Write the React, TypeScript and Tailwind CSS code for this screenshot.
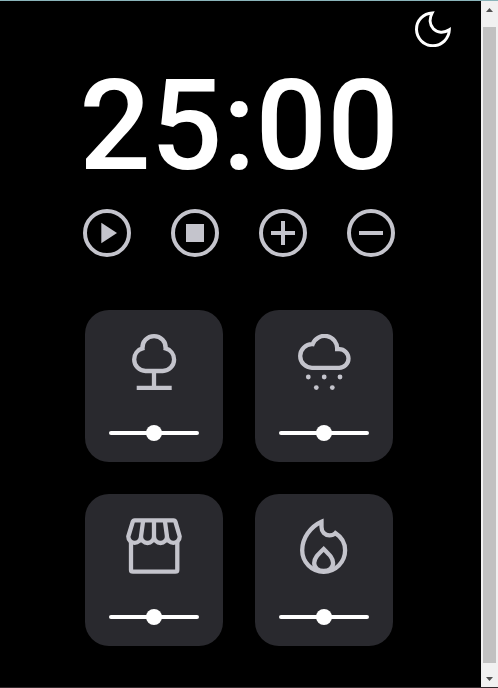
import { useState, type ReactNode } from "react";

const iconProps = {
  viewBox: "0 0 56 56",
  fill: "none",
  stroke: "currentColor",
  strokeWidth: 4.3,
  className: "size-14",
  "aria-hidden": true,
} as const;

function TreeIcon() {
  return (
    <svg {...iconProps}>
      <path d="M16.5 14.4A11.6 11.2 0 1 1 39.6 14.4A11.5 11.5 0 0 1 48.1 25.5A11.5 11.5 0 0 1 36.8 37H19.5A11.5 11.5 0 0 1 8.2 25.5A11.5 11.5 0 0 1 16.5 14.4Z" />
      <path d="M28 37V53.8M10.7 53.8H45.7" />
    </svg>
  );
}

function RainIcon() {
  return (
    <svg {...iconProps}>
      <path d="M41.2 15.2H43.2A9.3 9.3 0 0 1 43.2 33.8H16A11.8 11.8 0 0 1 4.2 22A11.8 11.8 0 0 1 16.6 10.2A12.7 12.7 0 0 1 41.2 15.2Z" />
      <g fill="currentColor" stroke="none">
        <circle cx="12.3" cy="43" r="2.4" />
        <circle cx="28.2" cy="43" r="2.4" />
        <circle cx="44" cy="43" r="2.4" />
        <circle cx="20.3" cy="53.6" r="2.4" />
        <circle cx="36.3" cy="53.6" r="2.4" />
      </g>
    </svg>
  );
}

function StoreIcon() {
  return (
    <svg {...iconProps} strokeLinejoin="round">
      <path d="M8.7 2.3H47.5Q49 2.3 49.4 3.7L53.7 18.5A6.35 6.35 0 0 1 41 18.5A6.5 6.5 0 0 1 28 18.5A6.5 6.5 0 0 1 15 18.5A6.35 6.35 0 0 1 2.3 18.5L6.8 3.7Q7.2 2.3 8.7 2.3Z" />
      <path d="M17.2 2.3L15 18.5M28 2.3V18.5M38.8 2.3L41 18.5" />
      <path d="M5 24V52Q5 53.7 7 53.7H49.3Q51.3 53.7 51.3 52V24" />
    </svg>
  );
}

function FireIcon() {
  return (
    <svg {...iconProps}>
      <path d="M25.5 3.8V9C25.5 14 29 17.4 33.4 17.4C35.8 17.4 38 16.6 39.4 15.1C45.5 19 49.1 25 49.1 32.3A21.45 21.45 0 0 1 6.2 32.3C6.2 20 14.5 8.8 25.5 3.8Z" />
      <path d="M27.7 31C22 36.5 18.2 40 18.2 45C18.2 49.8 22.3 53 27.7 53C33 53 37.1 49.8 37.1 45C37.1 40 33.3 36.5 27.7 31Z" />
    </svg>
  );
}

function RoundButton({ label, onClick, children }: { label: string; onClick: () => void; children: ReactNode }) {
  return (
    <button type="button" aria-label={label} onClick={onClick} className="size-12 cursor-pointer text-[#c4c4cc] hover:text-white">
      <svg viewBox="0 0 48 48" fill="none" stroke="currentColor" strokeWidth="4" className="size-12" aria-hidden>
        <circle cx="24" cy="24" r="22" />
        {children}
      </svg>
    </button>
  );
}

function SoundCard({ label, children }: { label: string; children: ReactNode }) {
  return (
    <div className="flex flex-col items-center rounded-3xl bg-[#29292e] px-6 pt-6 pb-[21px] text-[#c4c4cc]">
      <button type="button" aria-label={label} className="cursor-pointer">
        {children}
      </button>
      <input
        type="range"
        aria-label={`${label} volume`}
        defaultValue={50}
        className="mt-[35px] h-4 w-full cursor-pointer appearance-none bg-transparent [&::-webkit-slider-runnable-track]:h-1 [&::-webkit-slider-runnable-track]:rounded-full [&::-webkit-slider-runnable-track]:bg-white [&::-webkit-slider-thumb]:-mt-1.5 [&::-webkit-slider-thumb]:size-4 [&::-webkit-slider-thumb]:appearance-none [&::-webkit-slider-thumb]:rounded-full [&::-webkit-slider-thumb]:bg-white"
      />
    </div>
  );
}

function ScrollRail() {
  return (
    <div aria-hidden className="flex w-[17px] shrink-0 flex-col items-center bg-[#f1f1f1] text-[#505050]">
      <svg viewBox="0 0 17 26" className="h-[26px] w-[17px]" fill="currentColor">
        <path d="M5 11L8.5 7L12 11Z" />
      </svg>
      <div className="w-[13px] flex-1 bg-[#c1c1c1]" />
      <svg viewBox="0 0 17 24" className="h-6 w-[17px]" fill="currentColor">
        <path d="M5 14L8.5 18L12 14Z" />
      </svg>
    </div>
  );
}

export default function App() {
  const [minutes, setMinutes] = useState(25);
  return (
    <div className="flex min-h-screen border-t border-b border-t-[#8ab4ba] border-b-[#332b2e] bg-black font-['Roboto',sans-serif]">
      <div className="flex-1">
        <header className="flex justify-end pt-2.5 pr-[30px]">
          <button type="button" aria-label="Toggle theme" className="cursor-pointer text-white">
            <svg viewBox="0 0 36 36" fill="none" stroke="currentColor" strokeWidth="3" className="size-9" aria-hidden>
              <path d="M17.2 1.9C14 8 14.8 14 18.3 17.7C22.3 21.9 29 22.3 34.3 18.8A16.4 16.4 0 1 1 17.2 1.9Z" />
            </svg>
          </button>
        </header>
        <main className="flex flex-col items-center pt-4 pr-[3px] pb-10">
          <h1 className="text-[126px] leading-none font-medium text-white">{String(minutes).padStart(2, "0")}:00</h1>
          <div className="mt-5 flex gap-10">
            <RoundButton label="Start" onClick={() => {}}>
              <path d="M18.3 13.7V34.3L34 24Z" fill="currentColor" stroke="none" />
            </RoundButton>
            <RoundButton label="Stop" onClick={() => setMinutes(25)}>
              <path d="M15 15H33V33H15Z" fill="currentColor" stroke="none" />
            </RoundButton>
            <RoundButton label="Add five minutes" onClick={() => setMinutes((m) => Math.min(60, m + 5))}>
              <path d="M24 12V36M12 24H36" />
            </RoundButton>
            <RoundButton label="Remove five minutes" onClick={() => setMinutes((m) => Math.max(0, m - 5))}>
              <path d="M12 24H36" />
            </RoundButton>
          </div>
          <div className="mt-[53px] grid grid-cols-[138px_138px] gap-8">
            <SoundCard label="Forest"><TreeIcon /></SoundCard>
            <SoundCard label="Rain"><RainIcon /></SoundCard>
            <SoundCard label="Coffee shop"><StoreIcon /></SoundCard>
            <SoundCard label="Fireplace"><FireIcon /></SoundCard>
          </div>
        </main>
      </div>
      <ScrollRail />
    </div>
  );
}
